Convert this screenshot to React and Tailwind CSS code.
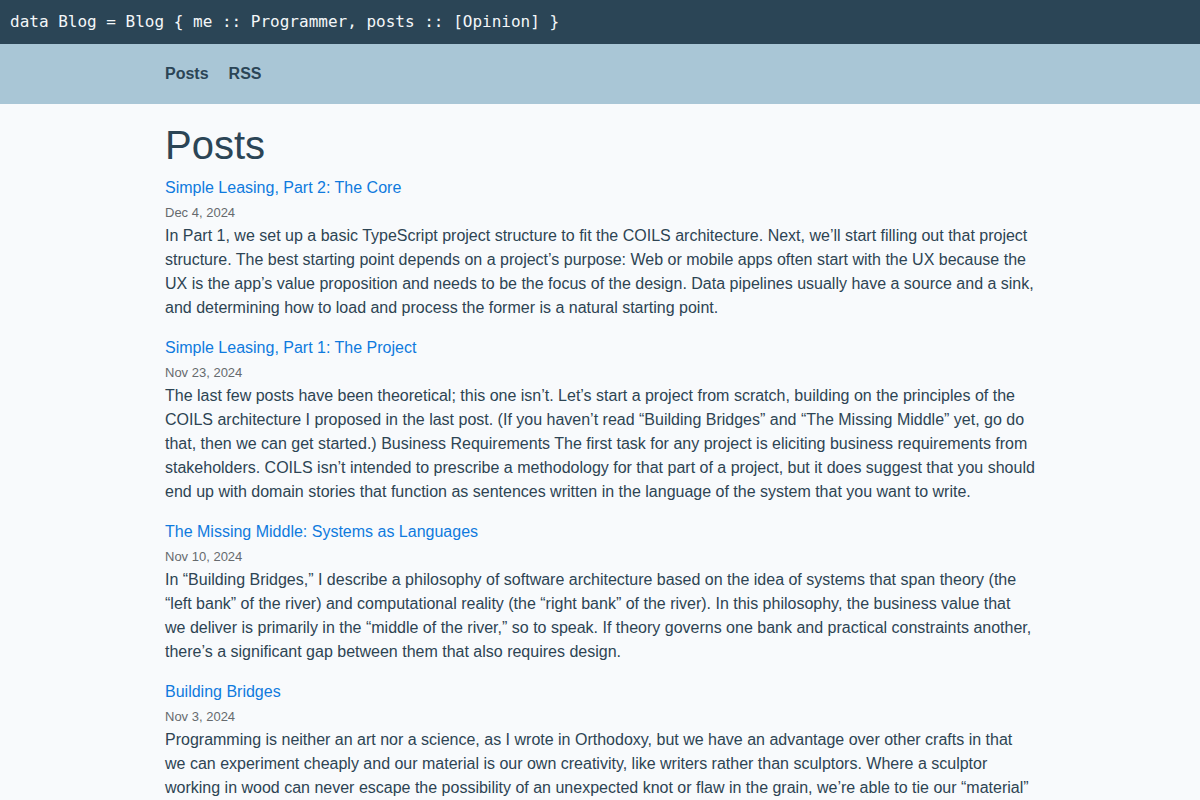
export default function App() {
  const posts = [
    {
      title: "Simple Leasing, Part 2: The Core",
      date: "Dec 4, 2024",
      body: "In Part 1, we set up a basic TypeScript project structure to fit the COILS architecture. Next, we\u2019ll start filling out that project structure. The best starting point depends on a project\u2019s purpose: Web or mobile apps often start with the UX because the UX is the app\u2019s value proposition and needs to be the focus of the design. Data pipelines usually have a source and a sink, and determining how to load and process the former is a natural starting point.",
    },
    {
      title: "Simple Leasing, Part 1: The Project",
      date: "Nov 23, 2024",
      body: "The last few posts have been theoretical; this one isn\u2019t. Let\u2019s start a project from scratch, building on the principles of the COILS architecture I proposed in the last post. (If you haven\u2019t read \u201cBuilding Bridges\u201d and \u201cThe Missing Middle\u201d yet, go do that, then we can get started.) Business Requirements The first task for any project is eliciting business requirements from stakeholders. COILS isn\u2019t intended to prescribe a methodology for that part of a project, but it does suggest that you should end up with domain stories that function as sentences written in the language of the system that you want to write.",
    },
    {
      title: "The Missing Middle: Systems as Languages",
      date: "Nov 10, 2024",
      body: "In \u201cBuilding Bridges,\u201d I describe a philosophy of software architecture based on the idea of systems that span theory (the \u201cleft bank\u201d of the river) and computational reality (the \u201cright bank\u201d of the river). In this philosophy, the business value that we deliver is primarily in the \u201cmiddle of the river,\u201d so to speak. If theory governs one bank and practical constraints another, there\u2019s a significant gap between them that also requires design.",
    },
    {
      title: "Building Bridges",
      date: "Nov 3, 2024",
      body: "Programming is neither an art nor a science, as I wrote in Orthodoxy, but we have an advantage over other crafts in that we can experiment cheaply and our material is our own creativity, like writers rather than sculptors. Where a sculptor working in wood can never escape the possibility of an unexpected knot or flaw in the grain, we\u2019re able to tie our \u201cmaterial\u201d to the ideas we wish to express, and build things that are exactly as complex as they need to be and no more.",
    },
  ];
  return (
    <div className="min-h-screen bg-[#f8fafc] font-['Liberation_Sans',Arial,sans-serif]">
      <header className="h-[44px] bg-[#2b4556] flex items-center px-[10px]">
        <span className="font-['DejaVu_Sans_Mono',monospace] text-[16px] text-[#f4f7f9] leading-none">
          data Blog = Blog {"{"} me :: Programmer, posts :: [Opinion] {"}"}
        </span>
      </header>
      <nav className="h-[60px] bg-[#a9c6d6] flex items-center">
        <div className="w-[870px] mx-auto flex gap-[20px] text-[16px] font-bold text-[#2b4556]">
          <a>Posts</a>
          <a>RSS</a>
        </div>
      </nav>
      <main className="w-[870px] mx-auto pt-[17px]">
        <h1 className="text-[40px] leading-[48px] text-[#2b4556] mb-[7px]">Posts</h1>
        <div className="flex flex-col gap-[16px]">
          {posts.map((p) => (
            <article key={p.title}>
              <a className="block text-[16px] leading-[24px] text-[#0f7ade]">{p.title}</a>
              <div className="mt-[3px] mb-[1px] text-[13px] leading-[20px] text-[#666a6e]">{p.date}</div>
              <p className="text-[16px] leading-[24px] text-[#2d4453]">{p.body}</p>
            </article>
          ))}
        </div>
      </main>
    </div>
  );
}
